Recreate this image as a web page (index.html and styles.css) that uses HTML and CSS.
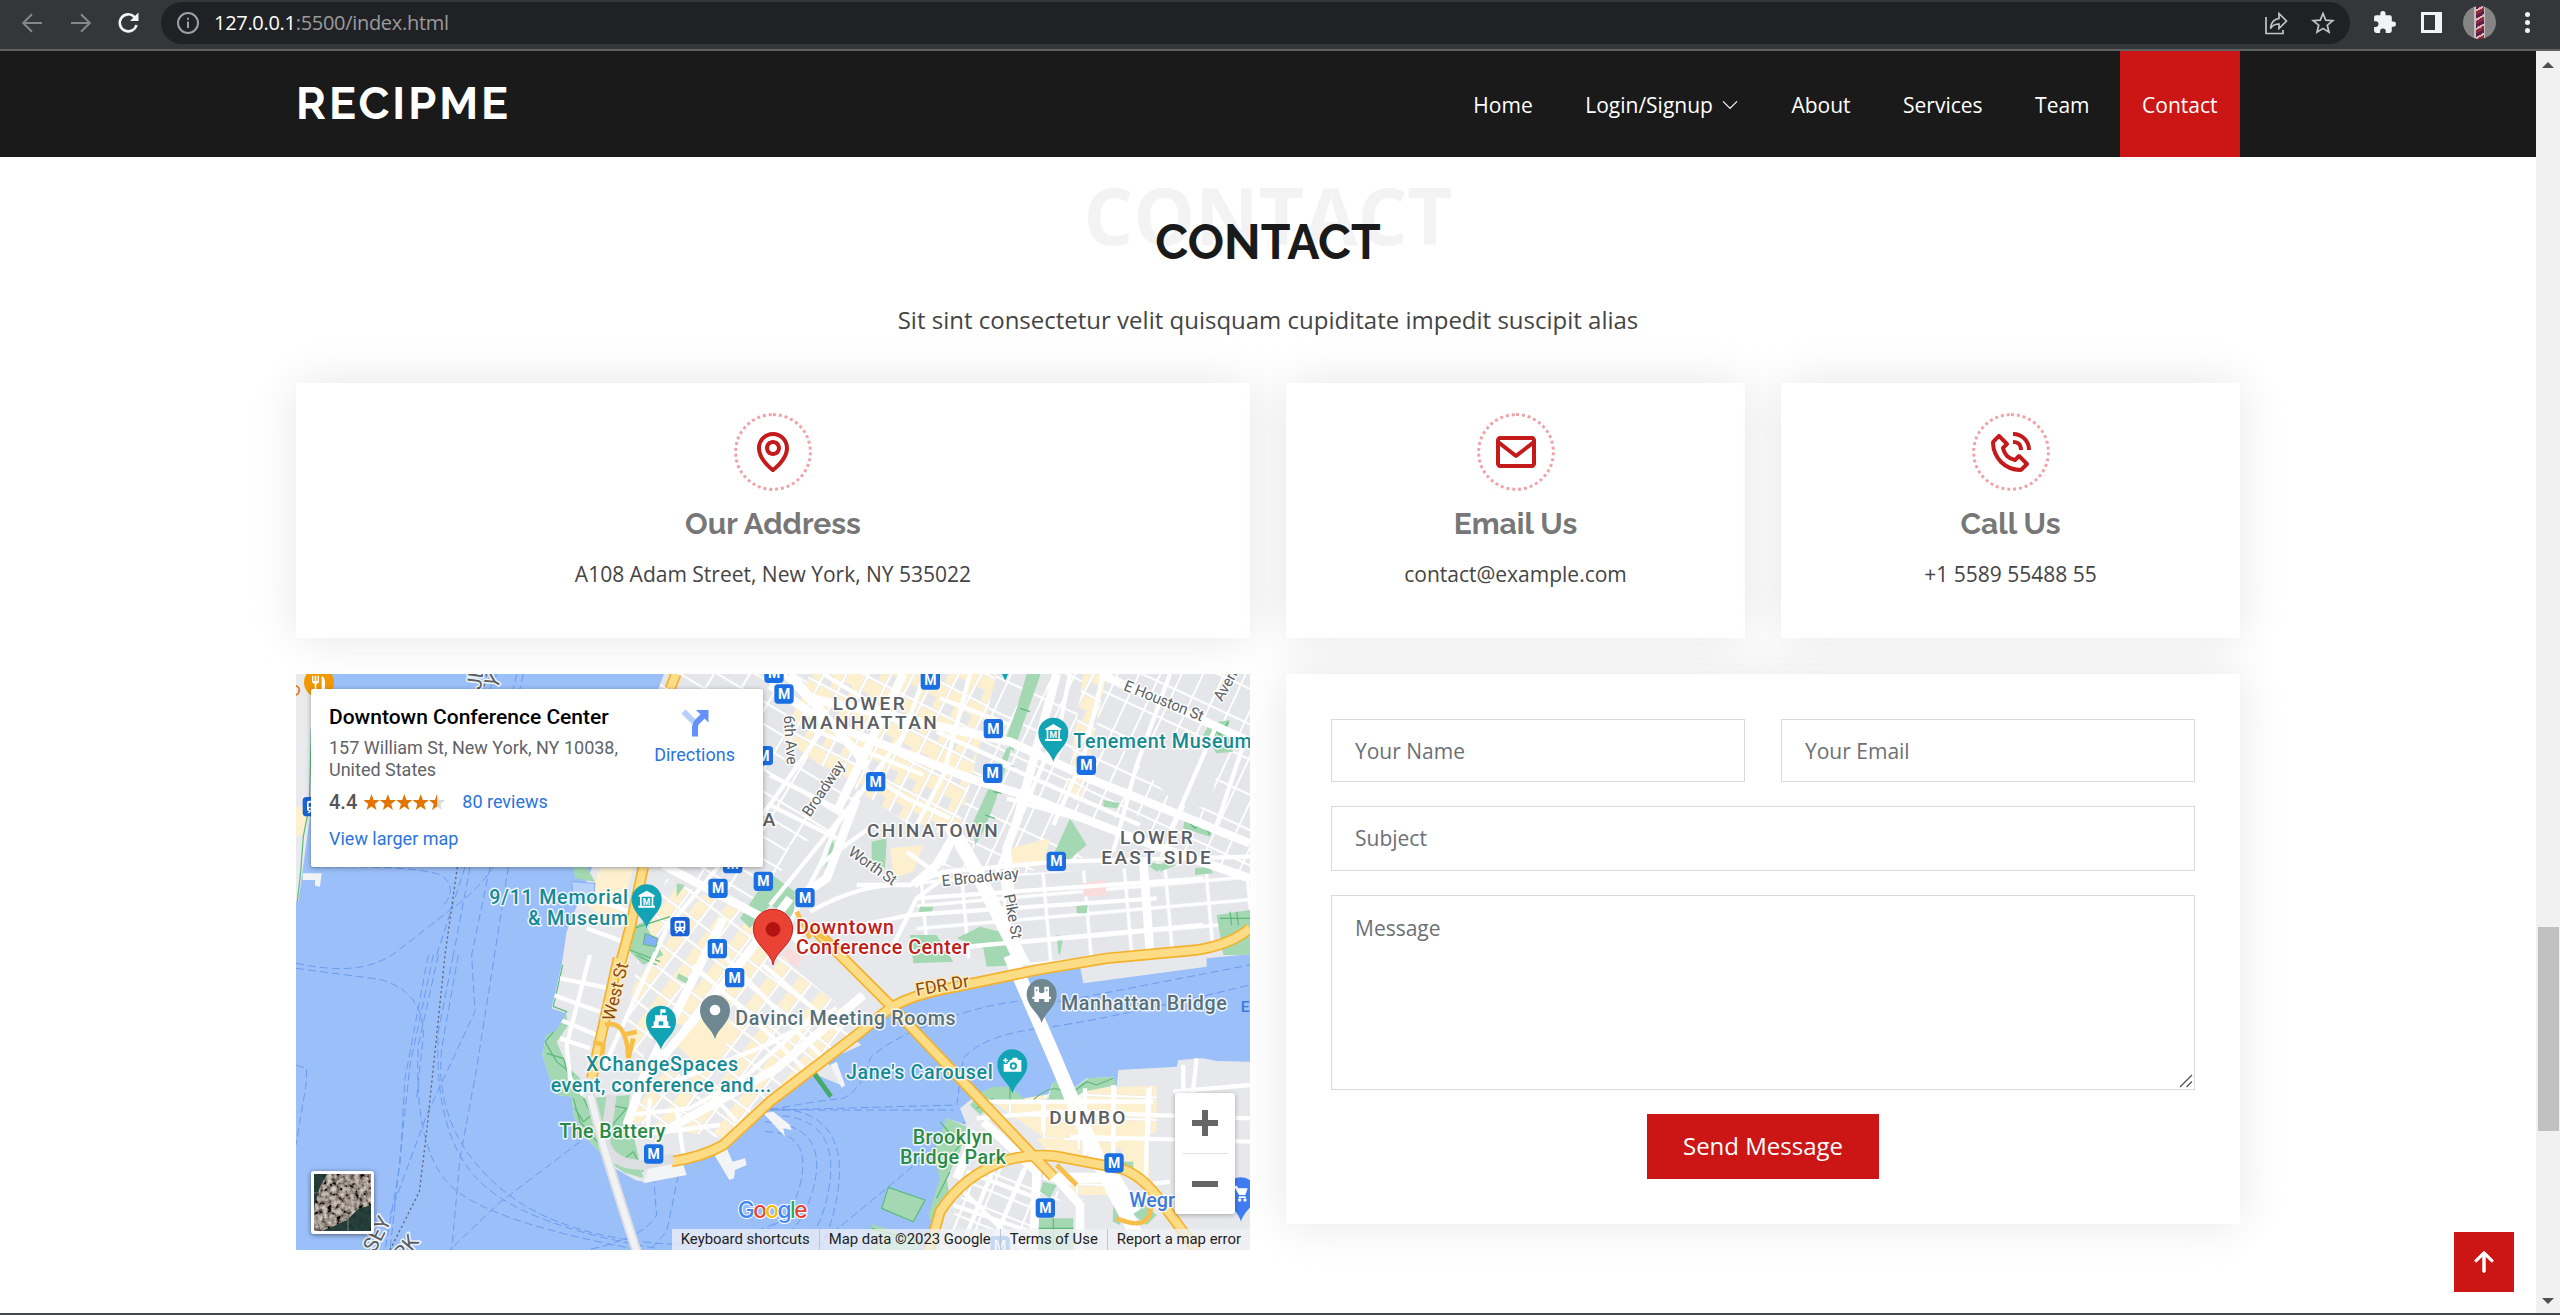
FILE: index.html
```html
<!DOCTYPE html>
<html lang="en">
<head>
<meta charset="utf-8">
<title>RECIPME</title>
<link rel="stylesheet" href="styles.css">
</head>
<body>
<div class="toolbar">
  <svg class="tb-icon dim" viewBox="0 0 24 24"><path d="M22 12H3.500M12 3.200 3.200 12l8.800 8.800" /></svg>
  <svg class="tb-icon dim" viewBox="0 0 24 24"><path d="M2 12h18.500M12 3.200 20.800 12 12 20.800" /></svg>
  <svg class="tb-icon reload" viewBox="0 0 24 24"><path d="M20 14a8.500 8.500 0 1 1-2.300-8.300L20 8" /><path class="solid" d="M22 1.500V10h-8.500z" /></svg>
  <div class="omnibox">
    <svg class="info" viewBox="0 0 24 24"><circle cx="12" cy="12" r="10" /><path d="M12 10.500v6.500M12 6.800v2" /></svg>
    <span class="url"><b>127.0.0.1</b>:5500/index.html</span>
    <svg class="ob-icon share" viewBox="0 0 24 24"><path d="M2 6v16.500h17V19" /><path d="M15 2.500v5C9 8.200 7 12 6.500 17.500c2-3.500 4.500-4.500 8.500-4.500v4.500L22.500 10z" /></svg>
    <svg class="ob-icon" viewBox="0 0 24 24"><path d="m12 2.500 2.700 6.600 7.100.5-5.500 4.600 1.700 7-6-3.800-6 3.800 1.700-7-5.500-4.600 7.100-.5z" /></svg>
  </div>
  <svg class="ext" viewBox="0 0 24 24"><path d="M20.500 11H19V7a2 2 0 0 0-2-2h-4V3.500a2.500 2.500 0 0 0-5 0V5H4a2 2 0 0 0-2 2v3.800h1.500a2.700 2.700 0 0 1 0 5.400H2V20a2 2 0 0 0 2 2h3.800v-1.500a2.700 2.700 0 0 1 5.400 0V22H17a2 2 0 0 0 2-2v-4h1.500a2.500 2.500 0 0 0 0-5z" /></svg>
  <span class="panel"></span>
  <span class="avatar"></span>
  <span class="dots"><i></i><i></i><i></i></span>
</div>

<div class="viewport">
<div class="page">
  <header class="header">
    <div class="container header-row">
      <h1 class="logo"><span>RECIPME</span></h1>
      <nav class="nav">
        <a>Home</a>
        <a>Login/Signup <svg viewBox="0 0 16 16"><path d="M1.646 4.646a.5.5 0 0 1 .708 0L8 10.293l5.646-5.647a.5.5 0 0 1 .708.708l-6 6a.5.5 0 0 1-.708 0l-6-6a.5.5 0 0 1 0-.708z" /></svg></a>
        <a>About</a>
        <a>Services</a>
        <a>Team</a>
        <a class="active">Contact</a>
      </nav>
    </div>
  </header>

  <main class="container">
    <div class="title">
      <span class="ghost">CONTACT</span>
      <h2><span>CONTACT</span></h2>
      <p><span>Sit sint consectetur velit quisquam cupiditate impedit suscipit alias</span></p>
    </div>

    <div class="grid">
      <section class="box wide">
        <svg class="round" viewBox="0 0 24 24"><path d="M12 14c2.206 0 4-1.794 4-4s-1.794-4-4-4-4 1.794-4 4 1.794 4 4 4zm0-6c1.103 0 2 .897 2 2s-.897 2-2 2-2-.897-2-2 .897-2 2-2z" /><path d="M11.420 21.814a.998.998 0 0 0 1.160 0C12.884 21.599 20.029 16.440 20 10c0-4.411-3.589-8-8-8S4 5.589 4 9.995c-.029 6.445 7.116 11.604 7.420 11.819zM12 4c3.309 0 6 2.691 6 6.005.021 4.438-4.388 8.423-6 9.730-1.611-1.308-6.021-5.294-6-9.735 0-3.309 2.691-6 6-6z" /></svg>
        <h3><span>Our Address</span></h3>
        <p><span>A108 Adam Street, New York, NY 535022</span></p>
      </section>
      <section class="box">
        <svg class="round" viewBox="0 0 24 24"><path d="M20 4H4c-1.103 0-2 .897-2 2v12c0 1.103.897 2 2 2h16c1.103 0 2-.897 2-2V6c0-1.103-.897-2-2-2zm0 2v.511l-8 6.223-8-6.222V6h16zM4 18V9.044l7.386 5.745a.994.994 0 0 0 1.228 0L20 9.044 20.002 18H4z" /></svg>
        <h3><span>Email Us</span></h3>
        <p><span>contact@example.com</span></p>
      </section>
      <section class="box">
        <svg class="round" viewBox="0 0 24 24"><path d="M16.570 22a2 2 0 0 0 1.430-.59l2.710-2.710a1 1 0 0 0 0-1.410l-4-4a1 1 0 0 0-1.410 0l-1.600 1.590a7.550 7.550 0 0 1-3-1.590 7.620 7.620 0 0 1-1.590-3l1.590-1.600a1 1 0 0 0 0-1.410l-4-4a1 1 0 0 0-1.410 0L2.590 6A2 2 0 0 0 2 7.430 15.280 15.280 0 0 0 6.300 17.700 15.280 15.280 0 0 0 16.570 22zM6 5.410 8.590 8 7.300 9.290a1 1 0 0 0-.3.910 10.120 10.120 0 0 0 2.300 4.500 10.080 10.080 0 0 0 4.500 2.300 1 1 0 0 0 .910-.270L16 15.410 18.590 18l-2 2a13.280 13.280 0 0 1-8.870-3.710A13.280 13.280 0 0 1 4 7.410zM20 11h2a8.810 8.810 0 0 0-9-9v2a6.770 6.770 0 0 1 7 7z" /><path d="M13 8c2.100 0 3 .9 3 3h2c0-3.220-1.780-5-5-5z" /></svg>
        <h3><span>Call Us</span></h3>
        <p><span>+1 5589 55488 55</span></p>
      </section>

      <div class="map wide">
        <svg class="map-canvas" viewBox="18 27 2862 1728">
          <defs>
            <pattern id="blocks" width="58" height="96" patternUnits="userSpaceOnUse" patternTransform="rotate(25)">
              <rect width="58" height="96" fill="#fff" /><rect x="5" y="5" width="49" height="86" fill="#e5e6ea" stroke="#d6d8dd" stroke-width="1.500" />
            </pattern>
            <pattern id="blocksY" width="60" height="84" patternUnits="userSpaceOnUse" patternTransform="rotate(27)">
              <rect width="60" height="84" fill="#fff" /><rect x="5" y="5" width="50" height="74" fill="#fdf0cf" stroke="#dcdcdc" stroke-width="1.500" /><rect x="5" y="46" width="28" height="33" fill="#e5e6ea" />
            </pattern>
            <pattern id="blocksT" width="92" height="58" patternUnits="userSpaceOnUse" patternTransform="rotate(31)">
              <rect width="92" height="58" fill="#fff" /><rect x="5" y="5" width="82" height="48" fill="#e5e6ea" stroke="#d6d8dd" stroke-width="1.500" />
            </pattern>
            <pattern id="blocksF" width="76" height="60" patternUnits="userSpaceOnUse" patternTransform="rotate(37)">
              <rect width="76" height="60" fill="#fff" /><rect x="5" y="5" width="66" height="50" fill="#fdf0cf" stroke="#dcdcdc" stroke-width="1.500" /><rect x="5" y="5" width="30" height="50" fill="#e8e9ec" />
            </pattern>
            <pattern id="blocksE" width="122" height="68" patternUnits="userSpaceOnUse" patternTransform="rotate(-5)">
              <rect width="122" height="68" fill="#fff" /><rect x="5" y="5" width="112" height="58" fill="#e5e6ea" />
            </pattern>
            <pattern id="blocksB" width="62" height="52" patternUnits="userSpaceOnUse" patternTransform="rotate(22)">
              <rect width="62" height="52" fill="#fff" /><rect x="5" y="5" width="52" height="42" fill="#e5e6ea" stroke="#d6d8dd" stroke-width="1.500" />
            </pattern>
            <pattern id="blocksD" width="105" height="67" patternUnits="userSpaceOnUse" patternTransform="rotate(2)">
              <rect width="105" height="67" fill="#fff" /><rect x="5" y="5" width="95" height="57" fill="#fdf0cf" stroke="#e2dfd5" stroke-width="1.500" />
            </pattern>
            <clipPath id="isle"><path d="M1122 27 905 610 830 800 815 900 785 1030 828 1045 800 1095 768 1112 757 1170 778 1235 802 1290 845 1295 852 1355 895 1425 955 1490 1035 1545 1180 1500 1270 1465 1330 1430 1440 1325 1560 1222 1660 1165 1714 1140 1680 1110 1790 1040 1880 995 2180 935 2370 905 2745 880 2880 868V27z" /></clipPath>
            <filter id="ground" x="0" y="0" width="100%" height="100%"><feTurbulence type="fractalNoise" baseFrequency=".22" numOctaves="3" seed="4" /><feColorMatrix values="1.300 0 0 0 -.33  1.200 0 0 0 -.32  1.050 0 0 0 -.28  0 0 0 0 1" /></filter>
            <g id="m"><rect x="-29" y="-29" width="58" height="58" rx="11" fill="#1a6fe3" /><text class="m-letter" y="15">M</text></g>
            <g id="train"><rect x="-29" y="-29" width="58" height="58" rx="11" fill="#1a62d6" /><path fill="#fff" d="M-16-12q0-6 6-6h20q6 0 6 6v20q0 6-6 6l5 6h-6l-5-6h-8l-5 6h-6l5-6q-6 0-6-6z" /><path fill="#1a62d6" d="M-11-11h9V0h-9zm13 0h9V0H2zM-10 5h5v5h-5zM5 5h5v5H5z" /></g>
            <path id="pin" d="M0 88C-8 55-45 40-45 0a45 45 0 0 1 90 0C45 40 8 55 0 88z" />
            <g id="museum"><use href="#pin" fill="#12a4b5" /><path fill="#fff" d="M-24-12 0-26l24 14v4h-48zM-20-8h5v28h-5zM15-8h5v28h-5zM-25 19h50v6h-50z" /><text class="mini" y="17">M</text></g>
          </defs>

          <rect x="18" y="27" width="2862" height="1728" fill="#9bbff9" />

          <!-- ferry routes -->
          <g class="ferry">
            <path d="M18 895C140 920 240 920 320 860L480 735Q560 680 610 606" /><path d="M18 910Q170 930 270 943 400 980 400 1110L380 1300" />
            <path d="M490 870 445 1100Q430 1400 560 1540T1100 1750" /><path d="M445 870 385 1140Q370 1450 480 1560T1050 1755" /><path d="M505 870 455 1150Q430 1390 620 1560T1200 1740" /><path d="M430 870 360 1200 300 1755" /><path d="M415 870 345 1240 330 1500 285 1755" />
            <path d="M600 606 545 870 555 1040 410 1350 300 1650" /><path d="M655 606 560 1210 510 1480 485 1755" /><path d="M18 1200 50 1210 48 1260 18 1440" /><path d="M870 1430 620 1620 480 1755" />
            <path d="M540 606 490 870M525 606 440 870M65 606Q430 600 465 640T460 720" /><path d="M620 27 600 72M680 27 670 72M700 27 690 72" /><path d="M1090 1530 1100 1650Q1060 1720 890 1755M1165 1530 1130 1700 1080 1755" />
            <path d="M1440 1335H1990M1440 1335Q1560 1310 1660 1300 1720 1270 1740 1180 1810 1110 2000 1050T2310 1010L2880 900" /><path d="M1460 1335 2000 1320 2020 1180Q2080 1110 2250 1090T2880 960" /><path d="M1440 1330Q1690 1330 1640 1600T1440 1755" /><path d="M1440 1350Q1660 1350 1615 1580T1400 1755" /><path d="M1425 1370Q1620 1380 1570 1570T1350 1755" /><path d="M1425 1400Q1570 1400 1530 1560T1280 1740" /><path d="M2060 1340Q1700 1650 1560 1755M1300 1740 1540 1640" />
          </g>
          <path class="border-line" d="M502 606 465 870 410 1400 388 1580 300 1755M590 27 580 72" />

          <!-- New Jersey shore -->
          <path fill="#e8eaed" d="M18 27H95L62 250 65 420 40 600 25 710H18z" /><path fill="#fdf0cf" d="M18 425H60L38 512H18z" /><path d="M38 625H95L90 665 75 662V645H38z" fill="#f1f3f4" /><path class="green-line" d="M64 190 58 420 40 515 32 620 22 710" />

          <!-- Manhattan -->
          <path fill="#e7e8ec" d="M1122 27 905 610 830 800 815 900 785 1030 828 1045 800 1095 768 1112 757 1170 778 1235 802 1290 845 1295 852 1355 895 1425 955 1490 975 1510 1035 1545 1060 1550 1185 1530 1180 1500 1270 1465 1330 1430 1440 1325 1560 1222 1665 1265 1590 1160 1660 1165 1714 1140 1680 1110 1790 1040 1880 995 2180 935 2370 905 2380 955 2750 905V880L2880 868V27z" />
          <g clip-path="url(#isle)">
            <path fill="url(#blocks)" d="M1900 27H2880V700L2440 560 2140 640 1950 600z" />
            <path fill="url(#blocksT)" d="M1122 27H1600L1750 330 1540 640 1380 760 1150 606H900z" />
            <path fill="url(#blocksY)" d="M1560 27H2120L2010 480 1860 480 1590 300 1480 220z" />
            <path fill="url(#blocksY)" d="M2380 27H2450L2370 420 2330 380z" />
            <path fill="url(#blocksE)" d="M1880 640 2740 600 2880 640V850L2200 900 1880 860z" />
            <path fill="url(#blocksF)" d="M1130 640 1400 760 1500 900 1720 1080 1440 1310 1300 1420 1010 1370 1060 1180 1000 1150 1040 900z" />
            <path fill="#e5e6ea" d="M1500 540 1750 480 1880 640 1860 760 1640 900 1440 720zM2480 230 2800 220 2760 430 2660 420zM1120 1050 1240 1120 1180 1230 1050 1200zM2350 470 2540 450 2620 590 2400 590z" />
            <path fill="#fdf0cf" d="M930 610H1030L980 790 890 720zM1800 550 1900 540 1870 620 1810 640zM2160 550 2280 520 2260 600 2170 610zM1150 1130 1280 1010 1340 1100 1240 1220z" />
            <path class="park" d="M2210 27H2252L2170 260 2145 230 2180 130zM2150 250 2165 245 2120 400 2080 500 2055 540 2050 470zM2340 460 2390 540 2330 590 2290 570zM1745 530 1790 520 1785 610 1745 590zM1625 520 1645 570 1605 612zM1440 625 1515 680 1510 760 1440 720 1380 790 1350 760zM2620 590 2660 600 2610 620zM2760 175 2820 165 2810 200 2830 260 2780 265 2740 210zM2685 455 2770 480 2760 515 2680 490zM2000 820 2070 785 2130 800 2180 900 2090 905 2080 850zM1860 810 1940 810 1990 890 1870 895zM2780 750 2880 735V870H2800zM2300 810 2320 815 2310 870 2305 865zM2715 610 2760 605 2770 625 2715 630zM2360 710 2395 710 2390 745 2360 745zM1890 725 1930 725 1920 755 1885 750zM2440 405 2490 415 2480 430 2440 425zM2560 590 2630 600 2600 620zM1160 655 1185 660 1160 695zM1020 790 1060 770 1120 870 1060 900 1020 860zM1165 925 1205 945 1195 960 1160 940z" />
            <path fill="#fadcdc" d="M2378 655 2445 645 2450 690 2382 695zM1495 850 1540 880 1520 905 1475 870z" />
            <path class="park" d="M757 1120 800 1090 828 1045 835 1080 800 1130 830 1200 870 1240 880 1300 1020 1290 1010 1370 1035 1430 1060 1540 960 1510 890 1430 840 1330 800 1290 750 1180z" />
            <path class="green-line" d="M818 900 790 1025 830 1040 800 1090 765 1130 800 1190 850 1230M850 1300 870 1370 930 1440M770 1165 820 1180 840 1250M960 1320 1010 1330 950 1400M980 1500 1030 1460 1060 1520M880 1300 905 1350 880 1370 855 1330M1040 870 1100 900M1020 855 1110 890M1000 800 1140 755M2820 740 2825 780M2840 740 2845 780M2790 760H2880M2760 180 2790 210 2815 170M2690 465 2715 490 2735 470 2760 510M2190 130 2220 140M2140 300 2170 305M2110 380 2135 385M2085 450 2115 460" />
            <g class="street">
              <path d="M1480 27 1660 220 1740 330 1850 400 1980 460" /><path d="M1905 27 1840 210 1640 480 1590 600 1440 890" /><path d="M1600 190 1440 420 1130 790 940 1210" /><path d="M1560 190 1900 330M1440 330 1680 450M1440 420 1640 520" /><path d="M1780 300 1440 720" /><path d="M905 700 1020 740M890 790 1000 830M900 870 830 1140 840 1240 880 1290" /><path d="M810 940 960 970M790 990 930 1040M800 1060 920 1110M810 1120 900 1150" />
              <path d="M1590 600 1640 560 1750 480M1700 660 1860 660M1560 740Q1720 650 1860 660L1960 620 2300 590 2880 575" /><path d="M1620 800 1860 750 2600 700M1880 700 2740 640M1870 860 2740 780M2040 27 1960 330 1880 480M2340 27 2310 180 2120 620" />
              <path d="M2440 27 2380 280 2290 480M2640 27 2540 300 2470 560M2780 180 2640 500M2860 240 2780 480M1950 100 2160 180M1940 200 2160 300M2140 300 2550 480M2150 400 2500 500" /><path d="M1600 27 1850 180M1850 560 1960 640 1880 700 1800 860M1300 870 1600 1180M1420 900 1650 1100M1210 900 1430 1100 1540 1210M1150 1250 1430 1140 1640 1030M1010 1350 1200 1330 1360 1240 1560 1060M1040 1410 1290 1380M1080 1300 1070 1420M1250 1270 1340 1370M1160 1330 1180 1470" />
            </g>
            <g class="avenue">
              <path d="M1500 27 1730 300M1560 100 2160 230 2420 350 2620 430 2880 535" /><path d="M1440 60 1600 170 2040 340 2200 390 2560 530 2880 640" /><path d="M2300 27 2180 470 2150 550 2160 680" /><path d="M1980 480 2050 600 2200 900" stroke-width="42" /><path d="M2010 480 1940 600 1870 660" /><path d="M2560 590 2580 860M1840 27 1640 440M1300 760 1060 1240 1010 1380M1500 700 1300 960 1040 1270" /><path d="M1440 740 1560 860M2430 27 2880 230M1010 1400 1140 1390 1460 1210 1720 990M1120 600 1440 770M1520 700 1610 640 1700 400" />
            </g>
          </g>
          <path fill="#f3f4f5" d="M1270 1465 1310 1450 1328 1490 1365 1480 1370 1500 1335 1515 1332 1540 1318 1545zM1080 1500 1180 1500 1190 1530 1060 1555zM1420 1345 1450 1340 1500 1380 1505 1395 1480 1390 1485 1415zM1620 1200 1640 1190 1665 1260 1655 1268z" />
          <path d="M1560 1220 1575 1215 1628 1290 1618 1300z" fill="#45a96a" /><path d="M845 650 915 655 910 710 850 700z" fill="#b8d2fb" stroke="#84aef4" stroke-width="3" /><path class="park" d="M850 606H890L915 650 855 640z" />
          <path class="park" d="M1062 800 1105 820 1095 860 1050 850z" /><path d="M1065 805 1103 820 1098 845 1060 838z" fill="#85b2f7" stroke="#5cba7d" stroke-width="3" />

          <!-- Brooklyn -->
          <path fill="#e7e8ec" d="M1920 1755 1950 1590 1955 1450 1970 1360 2030 1380 2010 1330 2060 1290 2100 1270 2160 1265 2210 1310 2270 1300 2290 1250 2330 1260 2330 1285 2390 1240 2470 1235 2480 1265 2485 1215 2660 1205 2665 1185 2740 1180 2780 1188 2880 1190V1755z" />
          <path fill="url(#blocksD)" d="M2115 1315 2380 1270 2600 1262 2600 1400 2440 1470 2290 1440z" /><path fill="#fdf0cf" d="M2240 1420 2320 1420 2380 1470 2280 1470zM2480 1430 2570 1380 2580 1540 2530 1530z" />
          <path fill="url(#blocksB)" d="M2110 1490 2240 1530 2320 1590 2200 1755H1950L2020 1580z" /><path fill="url(#blocksD)" d="M2300 1530H2460V1590H2330z" />
          <path class="park" d="M1795 1567 1905 1605 1870 1670 1775 1630zM1745 1678 1890 1720 1880 1755H1740zM1970 1358 2030 1385 2010 1460 1970 1540 1980 1600 1930 1680 1915 1650 1950 1540 1930 1470zM2040 1320 2075 1280 2110 1265 2160 1265 2215 1312 2120 1310 2070 1350zM2230 1310 2275 1300 2290 1250 2330 1260 2330 1285 2395 1240 2470 1235 2480 1260 2380 1280 2340 1310zM2260 1550 2300 1560 2280 1600 2250 1580zM2240 1660H2350V1755H2230zM2490 1490H2530V1520H2500zM2470 1620 2500 1600 2490 1680 2468 1670zM2540 1600 2600 1650 2570 1680 2520 1640z" />
          <path class="green-line" d="M2160 1265V1310M2230 1305Q2300 1240 2335 1300M2350 1280 2390 1250 2420 1260 2470 1240M1950 1370 2010 1440 1960 1500M1940 1600 1980 1520M1795 1567 1905 1605 1870 1670 1775 1630zM1745 1690 1890 1730M2240 1690H2350M2290 1660V1755M2060 1330 2110 1300" />
          <g class="street"><path d="M2090 1310H2590M2060 1360 2300 1340 2880 1360M2340 1415 2880 1430M2260 1310V1400M2385 1270V1470M2470 1260V1480M2575 1270 2565 1600M2680 1200V1400M2720 1180 2700 1360M2650 1280 2880 1260M2000 1560 2200 1755M2030 1520 2270 1610M1990 1620 2220 1700M2120 1490 2010 1755M2210 1500 2100 1755M2300 1530H2470M2560 1560 2640 1550" /></g>
          <g class="avenue"><path d="M2060 1400 2000 1540M2080 1370 2240 1520 2230 1755" /><path d="M2160 870 2290 1170 2370 1360 2440 1520 2530 1690 2560 1755" stroke-width="42" /><path d="M2300 1540 2370 1620V1755M2260 1530 2300 1540 2480 1540 2540 1640" /></g>

          <!-- expressways -->
          <g class="motor-edge"><path id="fdr" d="M1145 1490Q1240 1475 1300 1440L1440 1310 1700 1110 1800 1030Q1860 990 2000 965L2240 915 2450 880 2720 855Q2820 840 2880 790" /><path id="bridge" d="M1560 780 1660 880 1800 1020 2290 1535" /><path id="bqe" d="M1915 1765 1950 1640Q2020 1530 2150 1485 2250 1460 2330 1480L2490 1510Q2560 1530 2620 1620L2720 1755" /><path id="west" d="M1158 27 1140 72M1060 606 1020 790 990 900M985 880 905 1240" /></g>
          <g class="motor"><use href="#fdr" /><use href="#bridge" /><use href="#bqe" /><use href="#west" /></g>
          <path d="M945 1080Q1010 1060 1015 1180L1030 1120M1000 1110 1040 1100M910 1130 940 1140 935 1180M2300 1500 2360 1560M2480 1660Q2600 1710 2580 1590M1520 740 1560 820 1540 780 1620 830" fill="none" stroke="#f7bf4a" stroke-width="14" />
          <g fill="none" stroke="#dcdee1" stroke-width="30"><path d="M900 1290 940 1440 970 1540 1040 1760" /><path d="M965 1290 945 1430Q960 1500 1060 1500L1150 1480" /></g>
          <g fill="none" stroke="#f1f2f3" stroke-width="18"><path d="M900 1290 940 1440 970 1540 1040 1760" /></g>

          <!-- points of interest -->
          <circle cx="87" cy="52" r="45" fill="#f29900" /><path d="M66 32v16q0 8 8 8v20h5V56q8 0 8-8V32h-4v16h-4V32h-5v16h-4V32zM95 34q10 2 10 20v22H95z" fill="#fff" />
          <circle cx="14" cy="76" r="14" fill="none" stroke="#e8710a" stroke-width="5" />
          <g>
            <use href="#m" x="1284" y="670" /><use href="#m" x="1420" y="649" /><use href="#m" x="1282" y="851" /><use href="#m" x="1328" y="596" /><use href="#m" x="1420" y="272" /><use href="#m" x="1452" y="25" /><use href="#m" x="1482" y="87" /><use href="#m" x="1921" y="45" /><use href="#m" x="2110" y="191" /><use href="#m" x="2108" y="325" /><use href="#m" x="2389" y="301" /><use href="#m" x="1757" y="350" /><use href="#m" x="2299" y="589" /><use href="#m" x="1545" y="698" /><use href="#m" x="1334" y="938" /><use href="#m" x="1091" y="1467" /><use href="#m" x="2472" y="1494" /><use href="#m" x="2266" y="1629" /><use href="#m" x="2130" y="1742" opacity=".8" />
            <use href="#train" x="1170" y="785" /><use href="#train" x="67" y="425" />
          </g>
          <use href="#museum" x="1070" y="703" /><use href="#museum" x="2290" y="203" />
          <path d="M2136 27h18l-8 20z" fill="#12a4b5" />
          <g transform="translate(1113 1067)"><use href="#pin" fill="#12a4b5" /><path fill="#fff" d="M-2-34H14V-24H2V-16H18V2H22V16H28V22H-28V16H-22V2H-18V-16H-2z" /><path d="M-7 2H7V14H-7z" fill="#12a4b5" /></g>
          <g transform="translate(2167 1198)"><use href="#pin" fill="#12a4b5" /><path fill="#fff" d="M-8-13H-2L2-20H14L18-13H27V22H-26V-1H-14V-7H-8zM-23-19h5v5h5v4h-5v5h-5v-5h-5v-4h5z" /><circle cx="3" cy="5" r="11" fill="#12a4b5" /><circle cx="3" cy="5" r="5" fill="#fff" /></g>
          <g transform="translate(1275 1035)"><use href="#pin" fill="#6f8791" /><circle r="16" fill="#fff" /></g>
          <g transform="translate(2255 987)"><use href="#pin" fill="#6f8791" /><path fill="#fff" fill-rule="evenodd" d="M-22-22h14V-6Q0 2 8-6V-22H22V8H28V15H22V24H8V15H-8V24H-22V15H-28V8H-22zM-17-14V-8H-13V-14zM13-14V-8H17V-14z" /></g>
          <g transform="translate(2853 1582)"><use href="#pin" fill="#3f7cf0" /><path d="M-22-20h10l4 8h28l-7 20H-6zM-6 12h20v5H-8z" fill="#fff" /><circle cx="-4" cy="23" r="5" fill="#fff" /><circle cx="12" cy="23" r="5" fill="#fff" /></g>
          <path d="M1449 900C1444 860 1390 840 1390 792a59 59 0 0 1 118 0C1508 840 1454 860 1449 900z" fill="#ea4335" stroke="#c5221f" stroke-width="3" /><circle cx="1449" cy="793" r="22" fill="#b31412" />

          <!-- labels -->
          <g class="area">
            <text x="1628" y="134" textLength="216">LOWER</text><text x="1532" y="193" textLength="408">MANHATTAN</text>
            <text x="1731" y="517" textLength="392">CHINATOWN</text><text x="2490" y="537" textLength="218">LOWER</text><text x="2434" y="596" textLength="328">EAST SIDE</text><text x="2278" y="1376" textLength="228">DUMBO</text><text x="1418" y="482">A</text>
          </g>
          <g class="road">
            <text transform="translate(1481 152) rotate(86)" textLength="148">6th Ave</text><text transform="translate(1560 458) rotate(-56)" textLength="190">Broadway</text><text transform="translate(1672 568) rotate(35)" textLength="165">Worth St</text><text transform="translate(1957 664) rotate(-6)" textLength="232">E Broadway</text><text transform="translate(2142 690) rotate(80)" textLength="136">Pike St</text><text transform="translate(2498 74) rotate(22)" textLength="254">E Houston St</text><text transform="translate(2796 112) rotate(-61)" textLength="98">Aven</text>
            <text class="brown" transform="translate(972 1070) rotate(-76)" textLength="178">West St</text><text class="brown" transform="translate(1880 993) rotate(-10)" textLength="162">FDR Dr</text>
            <text class="state" transform="translate(255 1765) rotate(-63)">SEY</text><text class="state" transform="translate(340 1790) rotate(-50)">RK</text><text class="state" transform="translate(572 76) rotate(-82)">JE</text><text class="state" transform="translate(618 74) rotate(-58)">Y</text>
          </g>
          <g class="poi teal">
            <text x="598" y="716" textLength="416">9/11 Memorial</text><text x="714" y="780" textLength="300">&amp; Museum</text><text x="2350" y="248" textLength="535">Tenement Museum</text><text x="888" y="1217" textLength="456">XChangeSpaces</text><text x="782" y="1282" textLength="662">event, conference and...</text><text x="1668" y="1241" textLength="440">Jane's Carousel</text>
          </g>
          <g class="poi green"><text x="808" y="1418" textLength="318">The Battery</text><text x="1868" y="1436" textLength="240">Brooklyn</text><text x="1830" y="1498" textLength="318">Bridge Park</text></g>
          <g class="poi slate"><text x="1336" y="1079" textLength="661">Davinci Meeting Rooms</text><text x="2313" y="1034" textLength="497">Manhattan Bridge</text></g>
          <g class="poi blue"><text x="2518" y="1626">Wegr</text><text class="river" x="2852" y="1042">E</text></g>
          <g class="poi red"><text x="1518" y="806" textLength="294">Downtown</text><text x="1518" y="868" textLength="520">Conference Center</text></g>
          <text class="google" x="1343" y="1659" textLength="210"><tspan fill="#4285f4">G</tspan><tspan fill="#ea4335">o</tspan><tspan fill="#fbbc04">o</tspan><tspan fill="#4285f4">g</tspan><tspan fill="#34a853">l</tspan><tspan fill="#ea4335">e</tspan></text>
        </svg>

        <div class="place">
          <div class="place-info">
            <strong>Downtown Conference Center</strong>
            <p>157 William St, New York, NY 10038,<br>United States</p>
            <div class="rating"><b>4.4</b>
              <svg viewBox="0 0 82 17"><defs><path id="star" d="m8.500 0 2.100 5.900 6 .2-4.800 3.800 1.700 6.200-5-3.600-5 3.600 1.700-6.200L.4 6.100l6-.2z" /></defs><g fill="#e37400"><use href="#star" /><use href="#star" x="16.400" /><use href="#star" x="32.800" /><use href="#star" x="49.200" /></g><use href="#star" x="65.600" fill="#dadce0" /><path fill="#e37400" d="M74.100 0v12.500l-5 3.600 1.700-6.200L66 6.100l6-.2z" /></svg>
              <a>80 reviews</a></div>
            <a class="larger">View larger map</a>
          </div>
          <div class="directions">
            <svg viewBox="0 0 28 28"><path d="M2.500 2.500 13 13" fill="none" stroke="#b9cffb" stroke-width="6" /><path d="M14 27.500V18Q14 15 16 13L22 7" fill="none" stroke="#6390fa" stroke-width="6" /><path d="M15 1h12.500v12.500z" fill="#6390fa" /></svg>
            <a>Directions</a>
          </div>
        </div>
        <div class="thumb"><svg viewBox="0 0 57 57"><rect width="57" height="57" filter="url(#ground)" /><path d="M0 0H13L6 13 0 34zM57 31 44 35 33 46 20 52 8 57H57z" fill="#17352f" opacity=".9" /><path d="M2 40 8 52 20 51M34 0V57M0 19H57" fill="none" stroke="#a39b90" stroke-width=".7" /></svg></div>
        <div class="zoom"><i class="plus"></i><hr><i></i></div>
        <div class="legal"><span>Keyboard shortcuts</span><span>Map data ©2023 Google</span><span>Terms of Use</span><span>Report a map error</span></div>
      </div>

      <form class="form wide">
        <div class="pair"><input placeholder="Your Name"><input placeholder="Your Email"></div>
        <input class="subject" placeholder="Subject">
        <div class="message"><textarea placeholder="Message"></textarea><svg class="grip" viewBox="0 0 14 14"><path d="M1 13 13 1M7.500 13 13 7.500" /></svg></div>
        <button type="button"><span>Send Message</span></button>
      </form>
    </div>
  </main>
  <a class="to-top"><svg viewBox="0 0 16 16"><path d="M8 12a.5.5 0 0 0 .5-.5V5.707l2.146 2.147a.5.5 0 0 0 .708-.708l-3-3a.5.5 0 0 0-.708 0l-3 3a.5.5 0 1 0 .708.708L7.500 5.707V11.500a.5.5 0 0 0 .5.5z" /></svg></a>
</div>
<div class="scrollbar"><i class="up"></i><span></span><i class="down"></i></div>
</div>
</body>
</html>
```
FILE: styles.css
```css
* { box-sizing: border-box; }
html, body { margin: 0; height: 1315px; overflow: hidden; }
body { display: flex; flex-direction: column; background: #fff; color: #444; font-family: "Open Sans", sans-serif; border-bottom: 2px solid #45474b; }
h1, h2, h3, p { margin: 0; }

.toolbar { flex: none; display: flex; align-items: center; height: 51px; padding: 0 23px 4px 20px; background: #35363a; border-bottom: 2px solid #5f6062; }
.tb-icon { width: 24px; height: 24px; margin-right: 25px; fill: none; stroke: #85878a; stroke-width: 2; }
.tb-icon.reload { width: 25px; margin: 0 20px 0 -2px; stroke: #f1f3f4; stroke-width: 2.600; }
.reload .solid { fill: #f1f3f4; stroke: none; }
.omnibox { flex: none; display: flex; align-items: center; width: 2189px; height: 42px; padding: 0 15px; border-radius: 21px; background: #202124; }
.info { width: 24px; height: 24px; fill: none; stroke: #9aa0a6; stroke-width: 2; }
.url { flex: 1; margin-left: 14px; font-size: 20px; letter-spacing: -.3px; color: #9a9b9d; }
.url b { font-weight: 400; color: #fff; }
.ob-icon { width: 24px; height: 24px; margin-left: 23px; fill: none; stroke: #c4c7c5; stroke-width: 1.700; }
.ext { width: 25px; height: 25px; margin-left: 22px; fill: #f1f3f4; }
.panel { width: 21px; height: 21px; margin-left: 24px; border: 3px solid #f1f3f4; border-right-width: 7px; }
.avatar { width: 33px; height: 33px; margin-left: 21px; border-radius: 50%; background: repeating-linear-gradient(150deg, #5a2145 0 3px, #e2b3b6 3px 5px, #8d2b3f 5px 8px) center / 8px 100% no-repeat, linear-gradient(90deg, #858585 32%, #c4bfc2 32% 68%, #858585 68%); }
.dots { display: flex; flex-direction: column; gap: 3px; margin-left: 29px; }
.dots i { width: 5px; height: 5px; border-radius: 50%; background: #f1f3f4; }

.viewport { flex: 1; display: flex; min-height: 0; }
.page { flex: 1; position: relative; }
.container { width: 1944px; margin: 0 auto; }
.header { height: 106px; background: #1a1a1a; }
.header-row { display: flex; justify-content: space-between; height: 100%; }
.logo { font: 700 45px/106px Raleway, Lato, sans-serif; letter-spacing: 3px; color: #fff; }
.nav { display: flex; gap: 7.500px; }
.nav a { display: flex; align-items: center; padding: 2px 22.500px 0; font-size: 21px; color: #fff; }
.nav svg { width: 18px; height: 18px; margin-left: 8px; fill: #fff; }
.nav .active { background: #cc1616; }

.title { position: relative; height: 226px; text-align: center; }
.ghost { position: absolute; inset: 0 0 auto; top: 5px; font-size: 78px; font-weight: 700; line-height: 106px; color: #f3f3f3; }
.title h2 { position: relative; padding-top: 55px; font: 700 48px/60px Raleway, Lato, sans-serif; color: #1a1a1a; }
.title p { padding-top: 30px; font-size: 24px; line-height: 36px; }

.grid { display: grid; grid-template-columns: repeat(4, 1fr); gap: 36px; align-items: start; }
.wide { grid-column: span 2; }
.box, .form { background: #fff; box-shadow: 0 0 45px rgba(214, 215, 216, .6); }
.box { height: 255px; padding-top: 30px; text-align: center; }
.round { display: block; width: 78px; height: 78px; margin: 0 auto; padding: 12px; border: 3px dotted #efa3a8; border-radius: 50%; fill: #c51a1b; }
.box h3 { margin-top: 15px; font: 700 30px/36px Raleway, Lato, sans-serif; color: #777; }
.box p { margin-top: 16px; font-size: 21px; line-height: 32px; }

.map { position: relative; height: 576px; overflow: hidden; font-family: Roboto, sans-serif; }
.map-canvas { display: block; width: 954px; height: 576px; }
.ferry { fill: none; stroke: #6b9bee; stroke-width: 3; stroke-dasharray: 24 12; }
.border-line { fill: none; stroke: #5f6b7d; stroke-width: 4; stroke-dasharray: 7 8; }
.park { fill: #a3d8b3; }
.green-line { fill: none; stroke: #5cb97a; stroke-width: 3.500; }
.street { fill: none; stroke: #fff; stroke-width: 13; }
.avenue { fill: none; stroke: #fff; stroke-width: 26; }
.motor-edge { fill: none; stroke: #f3b12c; stroke-width: 34; }
.motor { fill: none; stroke: #fddc86; stroke-width: 24; }
.m-letter { font: 700 42px Roboto, sans-serif; fill: #fff; text-anchor: middle; }
.mini { font: 700 26px Roboto, sans-serif; fill: #fff; text-anchor: middle; }
.area text, .road text, .poi text { paint-order: stroke; stroke: rgba(255, 255, 255, .85); stroke-width: 9px; stroke-linejoin: round; }
.area { font: 500 57px Roboto, sans-serif; fill: #5b5e63; }
.road { font: 400 46px Roboto, sans-serif; fill: #5b5e63; }
.road .brown { font-size: 53px; fill: #8a4b0f; stroke: #fde9b8; }
.road .state { font-size: 62px; fill: #5b5e63; }
.poi { font: 500 59px Roboto, sans-serif; }
.teal { fill: #168a94; }
.green { fill: #2b8a46; }
.slate { fill: #56707c; }
.blue { fill: #3c79dc; }
.poi .river { font-size: 46px; stroke: none; }
.red { fill: #bd2019; }
.google { font: 500 68px Inter, sans-serif; paint-order: stroke; stroke: #fff; stroke-width: 6px; }

.place { position: absolute; left: 15px; top: 15px; display: flex; justify-content: space-between; width: 452px; height: 178px; padding: 15px 28px 0 18px; background: #fff; border-radius: 2px; box-shadow: 0 1px 5px rgba(0, 0, 0, .35); font-size: 18px; line-height: 22px; color: #5f6368; }
.place strong { display: block; font-size: 21px; font-weight: 500; line-height: 27px; color: #000; }
.place p { margin-top: 6px; white-space: nowrap; }
.place a { color: #2a74dd; }
.rating { display: flex; align-items: center; margin-top: 10px; }
.rating b { font-size: 20px; font-weight: 500; color: #555; }
.rating svg { width: 82px; height: 17px; margin: 0 17px 0 6px; }
.larger { display: block; margin-top: 15px; }
.directions { display: flex; flex-direction: column; align-items: center; gap: 7px; padding-top: 5px; }
.directions svg { width: 28px; height: 28px; }
.thumb { position: absolute; left: 15px; top: 497px; width: 63px; height: 63px; border: 3px solid #fff; border-radius: 3px; box-shadow: 0 1px 5px rgba(0, 0, 0, .5); }
.thumb svg { display: block; width: 57px; height: 57px; }
.zoom { position: absolute; left: 879px; top: 419px; width: 60px; height: 121px; display: flex; flex-direction: column; align-items: center; justify-content: space-between; padding: 27px 0; background: #fff; border-radius: 3px; box-shadow: 0 1px 5px rgba(0, 0, 0, .3); }
.zoom i { width: 26px; height: 6px; background: #666; }
.zoom .plus { position: relative; }
.zoom .plus::after { content: ""; position: absolute; left: 10px; top: -10px; width: 6px; height: 26px; background: #666; }
.zoom hr { width: 45px; height: 1px; margin: 0; border: 0; background: #e0e0e0; }
.legal { position: absolute; right: 0; bottom: 0; display: flex; height: 21px; padding-right: 9px; background: rgba(240, 242, 245, .75); font-size: 14.880px; line-height: 21px; color: #222; }
.legal span { padding-left: 9px; }
.legal span + span { margin-left: 9px; border-left: 1px solid #b9c6dd; }

.form { display: flex; flex-direction: column; align-items: center; gap: 24px; height: 550px; padding: 45px; }
.pair { display: grid; grid-template-columns: 1fr 1fr; gap: 36px; width: 100%; }
.form input, .form textarea { display: block; width: 100%; height: 63px; padding: 0 23px; border: 1px solid #d9dbdd; background: #fff; font: 21px "Open Sans", sans-serif; color: #444; }
.form .subject { height: 65px; }
.message { position: relative; width: 100%; }
.form textarea { height: 195px; padding: 18px 23px; resize: none; }
.grip { position: absolute; right: 2px; bottom: 2px; width: 14px; height: 14px; fill: none; stroke: #555; stroke-width: 1.400; }
.form ::placeholder { color: #6c7075; }
.form button { width: 232px; height: 66px; padding: 0 0 2px; border: 0; background: #cc1616; color: #fff; font: 24px "Open Sans", sans-serif; }

.to-top { position: absolute; right: 22px; bottom: 21px; display: flex; align-items: center; justify-content: center; width: 60px; height: 60px; background: #cc1616; }
.to-top svg { width: 42px; height: 42px; fill: #fff; stroke: #fff; stroke-width: .3; }
.scrollbar { position: relative; width: 24px; display: flex; flex-direction: column; align-items: center; justify-content: space-between; padding: 11px 0 9px; background: #f1f1f1; }
.scrollbar span { position: absolute; left: 2px; top: 876px; width: 21px; height: 204px; background: #c1c1c1; }
.scrollbar i { border: 6px solid transparent; }
.scrollbar .up { border-bottom-color: #505050; border-top: 0; }
.scrollbar .down { border-top-color: #505050; border-bottom: 0; }
```
